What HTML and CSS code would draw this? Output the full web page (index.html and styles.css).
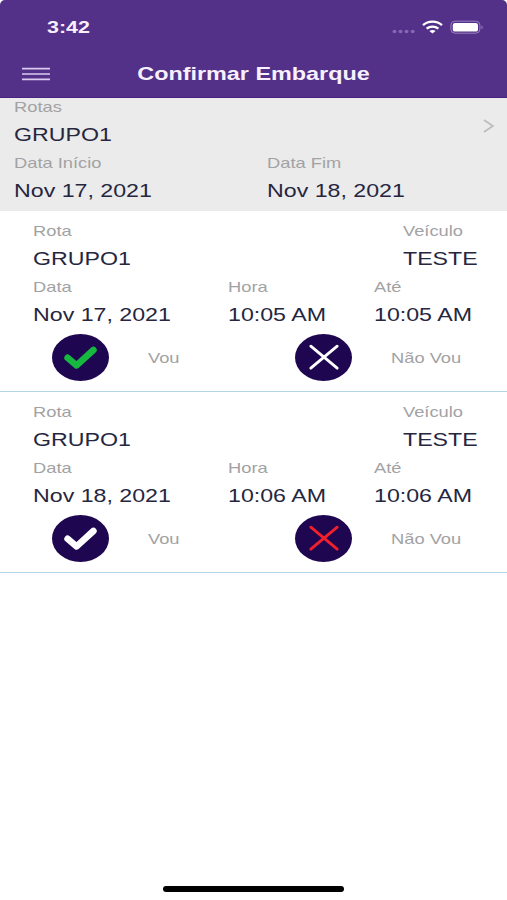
FILE: index.html
```
<!DOCTYPE html>
<html lang="pt-BR">
<head>
    <meta charset="UTF-8">
    <meta name="viewport" content="width=device-width, initial-scale=1.0">
    <title>Confirmar Embarque</title>
    <link rel="stylesheet" href="styles.css">
</head>
<body>
<div class="screen">
    <header>
        <div class="status-bar">
            <span class="time">3:42</span>
            <div class="status-icons">
                <svg class="signal" width="24" height="6" viewBox="0 0 24 6">
                    <g fill="#8667b4">
                        <ellipse cx="2.5" cy="2.5" rx="2" ry="1.7"/>
                        <ellipse cx="8.5" cy="2.5" rx="2" ry="1.7"/>
                        <ellipse cx="14.5" cy="2.5" rx="2" ry="1.7"/>
                        <ellipse cx="20.7" cy="2.5" rx="2" ry="1.7"/>
                    </g>
                </svg>
                <svg class="wifi" width="21" height="14" viewBox="0 0 21 14">
                    <g fill="none" stroke="#ffffff" stroke-width="2.3">
                        <path d="M1 5.1C6.2 0.4 14.8 0.4 20 5.1"/>
                        <path d="M4.6 8.7C8 5.8 13 5.8 16.4 8.7"/>
                    </g>
                    <path d="M10.5 13.4L7.4 11.1C9.2 9.5 11.8 9.5 13.6 11.1Z" fill="#ffffff"/>
                </svg>
                <svg class="battery" width="34" height="14" viewBox="0 0 34 14">
                    <rect x="0.9" y="1.2" width="29" height="12" rx="4" fill="none" stroke="#9a80c0" stroke-width="1"/>
                    <rect x="2.8" y="3" width="25.2" height="8.6" rx="2.2" fill="#ffffff"/>
                    <path d="M31.5 5.4C33.2 6 33.2 8.6 31.5 9.2Z" fill="#9a80c0"/>
                </svg>
            </div>
        </div>
        <div class="navbar">
            <button class="menu-button" aria-label="Menu">
                <svg width="29" height="14" viewBox="0 0 29 14">
                    <path d="M1 1.6H29M1 7H29M1 12.4H29" stroke="#d9c9ee" stroke-width="1.6"/>
                </svg>
            </button>
            <h1><span>Confirmar Embarque</span></h1>
        </div>
    </header>

    <section class="filter">
        <div class="filter-fields">
            <div class="field full">
                <span class="label">Rotas</span>
                <span class="value">GRUPO1</span>
            </div>
            <div class="field">
                <span class="label">Data Início</span>
                <span class="value">Nov 17, 2021</span>
            </div>
            <div class="field">
                <span class="label">Data Fim</span>
                <span class="value">Nov 18, 2021</span>
            </div>
        </div>
        <svg class="chevron" width="12" height="14" viewBox="0 0 12 14">
            <path d="M1 1L9.8 7L1 13" fill="none" stroke="#bdbdbf" stroke-width="1.8"/>
        </svg>
    </section>

    <main>
        <article class="trip">
            <div class="trip-route">
                <div class="field">
                    <span class="label">Rota</span>
                    <span class="value">GRUPO1</span>
                </div>
                <div class="field">
                    <span class="label">Veículo</span>
                    <span class="value">TESTE</span>
                </div>
            </div>
            <div class="trip-schedule">
                <div class="field">
                    <span class="label">Data</span>
                    <span class="value">Nov 17, 2021</span>
                </div>
                <div class="field">
                    <span class="label">Hora</span>
                    <span class="value">10:05 AM</span>
                </div>
                <div class="field">
                    <span class="label">Até</span>
                    <span class="value">10:05 AM</span>
                </div>
            </div>
            <div class="trip-actions">
                <button class="choice yes selected" aria-label="Vou">
                    <svg width="57" height="47" viewBox="0 0 57 47">
                        <path d="M15.6 23.8L24.6 31.4L41.4 16"/>
                    </svg>
                </button>
                <span class="label">Vou</span>
                <button class="choice no" aria-label="Não Vou">
                    <svg width="57" height="47" viewBox="0 0 57 47">
                        <path d="M15.8 12.2L42.2 34.2M42.2 12.2L15.8 34.2"/>
                    </svg>
                </button>
                <span class="label">Não Vou</span>
            </div>
        </article>

        <article class="trip">
            <div class="trip-route">
                <div class="field">
                    <span class="label">Rota</span>
                    <span class="value">GRUPO1</span>
                </div>
                <div class="field">
                    <span class="label">Veículo</span>
                    <span class="value">TESTE</span>
                </div>
            </div>
            <div class="trip-schedule">
                <div class="field">
                    <span class="label">Data</span>
                    <span class="value">Nov 18, 2021</span>
                </div>
                <div class="field">
                    <span class="label">Hora</span>
                    <span class="value">10:06 AM</span>
                </div>
                <div class="field">
                    <span class="label">Até</span>
                    <span class="value">10:06 AM</span>
                </div>
            </div>
            <div class="trip-actions">
                <button class="choice yes" aria-label="Vou">
                    <svg width="57" height="47" viewBox="0 0 57 47">
                        <path d="M15.6 23.8L24.6 31.4L41.4 16"/>
                    </svg>
                </button>
                <span class="label">Vou</span>
                <button class="choice no selected" aria-label="Não Vou">
                    <svg width="57" height="47" viewBox="0 0 57 47">
                        <path d="M15.8 12.2L42.2 34.2M42.2 12.2L15.8 34.2"/>
                    </svg>
                </button>
                <span class="label">Não Vou</span>
            </div>
        </article>
    </main>

    <div class="home-indicator"></div>
</div>
</body>
</html>
```

FILE: styles.css
```
* {
    box-sizing: border-box;
}

body {
    margin: 0;
    background: #FFFFFF;
    font-family: "Liberation Sans", Arial, sans-serif;
}

.screen {
    display: flex;
    flex-direction: column;
    width: 507px;
    height: 900px;
    overflow: hidden;
}

button {
    display: flex;
    padding: 0;
    border: none;
    background: none;
    cursor: pointer;
}

/* Header */
header {
    flex: none;
    height: 98px;
    background: #533188;
    border-bottom: 1px solid #4A2382;
    border-radius: 5px 5px 0 0;
    color: #F8F0FF;
}

.status-bar {
    display: flex;
    justify-content: space-between;
    height: 54px;
    padding: 0 23px 0 47px;
}

.time {
    font-size: 17px;
    font-weight: bold;
    line-height: 56px;
    transform: scaleX(1.26);
    transform-origin: left;
}

.status-icons {
    display: flex;
    align-items: flex-start;
    padding-top: 20px;
}

.signal {
    margin: 9px 6px 0 0;
}

.wifi {
    margin-right: 7px;
}

.navbar {
    display: grid;
    grid-template-columns: 60px 1fr 60px;
    align-items: center;
    height: 40px;
}

.menu-button {
    margin-left: 21px;
}

h1 {
    margin: 0;
    font-size: 19px;
    line-height: 40px;
    text-align: center;
}

h1 span {
    display: inline-block;
    transform: scaleX(1.23);
}

/* Label above value */
.field {
    display: flex;
    flex-direction: column;
    align-items: flex-start;
}

.label,
.value {
    line-height: 28.25px;
    white-space: nowrap;
    transform: scaleX(1.22);
    transform-origin: left;
}

.label {
    font-size: 15px;
    color: #A2A2A4;
}

.value {
    font-size: 19px;
    color: #26263F;
}

/* Filter */
.filter {
    display: flex;
    flex: none;
    justify-content: space-between;
    height: 113px;
    padding: 0 12px 0 13.6px;
    background: #EBEBEB;
}

.filter-fields {
    display: grid;
    grid-template-columns: 253px 1fr;
    align-content: start;
    margin-top: -5.4px;
}

.full {
    grid-column: 1 / -1;
}

.chevron {
    margin-top: 21px;
}

/* Trips */
.trip {
    height: 181px;
    padding: 5.6px 0 0 33.4px;
    border-bottom: 1px solid #B0D6E8;
}

.trip-route {
    display: grid;
    grid-template-columns: 370px 1fr;
}

.trip-schedule {
    display: grid;
    grid-template-columns: 194.4px 146px 1fr;
}

.trip-actions {
    display: grid;
    grid-template-columns: 96px 147px 96px 1fr;
    align-items: center;
    margin: 4.6px 0 0 19px;
}

.trip-actions .label {
    padding-top: 1px;
}

.choice {
    width: 57px;
    height: 47px;
    border-radius: 50%;
    background: #1E0750;
}

.choice path {
    fill: none;
    stroke: #FFFFFF;
    stroke-linecap: round;
    stroke-linejoin: round;
}

.yes path {
    stroke-width: 6.6;
}

.no path {
    stroke-width: 2.8;
}

.yes.selected path {
    stroke: #17B83F;
}

.no.selected path {
    stroke: #F0202C;
}

.home-indicator {
    width: 181px;
    height: 6px;
    margin: auto auto 8px;
    border-radius: 3px;
    background: #000000;
}
```
